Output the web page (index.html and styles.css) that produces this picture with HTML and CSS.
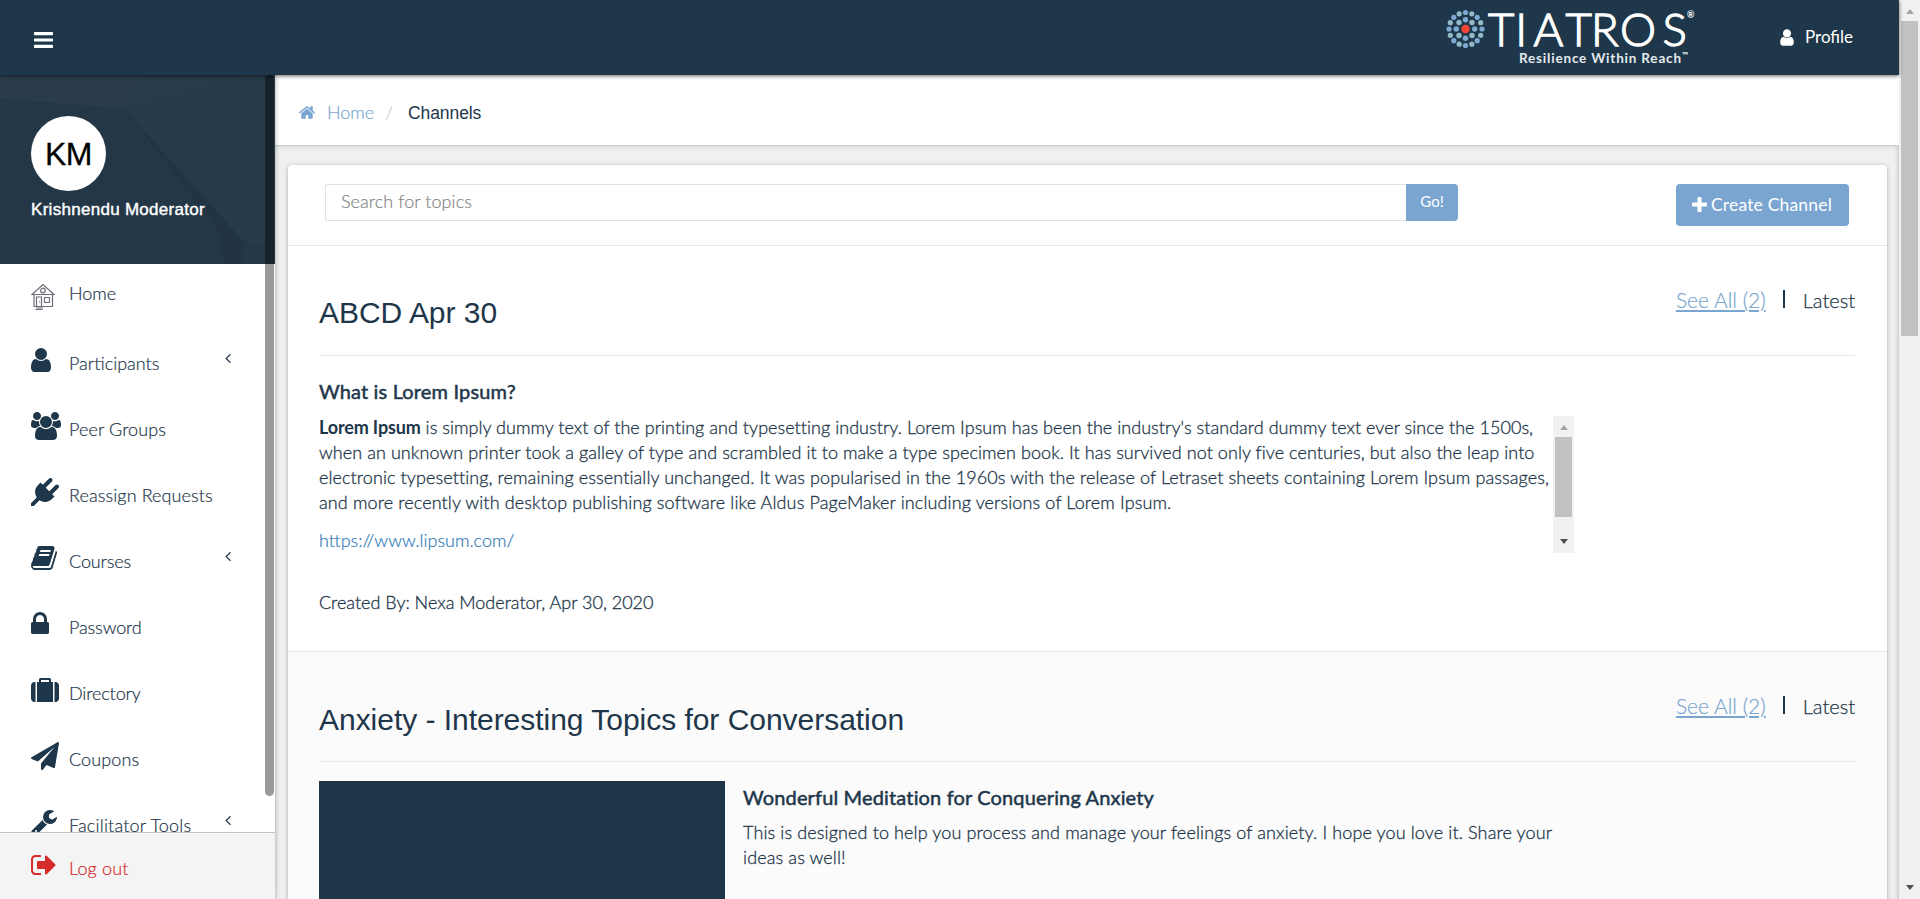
FILE: index.html
```html
<!DOCTYPE html>
<html lang="en">
<head>
<meta charset="utf-8">
<title>Channels</title>
<link rel="stylesheet" href="styles.css">
</head>
<body>
<svg class="sprite" aria-hidden="true">
  <symbol id="user" viewBox="256 0 1280 1792"><path d="M1536 1399q0 109-62.5 187t-150.5 78h-854q-88 0-150.5-78t-62.5-187q0-85 8.5-160.5t31.5-152 58.5-131 94-89 134.5-34.500q131 128 313 128t313-128q76 0 134.500 34.500t94 89 58.500 131 31.500 152 8.500 160.500zm-256-887q0 159-112.500 271.500t-271.500 112.500-271.500-112.500-112.500-271.500 112.500-271.500 271.500-112.500 271.500 112.500 112.500 271.500z"/></symbol>
  <symbol id="angle" viewBox="576 384 640 1152"><path d="M1203 544q0 13-10 23l-393 393 393 393q10 10 10 23t-10 23l-50 50q-10 10-23 10t-23-10l-466-466q-10-10-10-23t10-23l466-466q10-10 23-10t23 10l50 50q10 10 10 23z"/></symbol>
</svg>
<div class="app">
  <div class="page">
    <header class="topbar">
      <svg class="bars" viewBox="128 256 1536 1280"><path d="M1664 1344v128q0 26-19 45t-45 19h-1408q-26 0-45-19t-19-45v-128q0-26 19-45t45-19h1408q26 0 45 19t19 45zm0-512v128q0 26-19 45t-45 19h-1408q-26 0-45-19t-19-45v-128q0-26 19-45t45-19h1408q26 0 45 19t19 45zm0-512v128q0 26-19 45t-45 19h-1408q-26 0-45-19t-19-45v-128q0-26 19-45t45-19h1408q26 0 45 19t19 45z"/></svg>
      <div class="topright">
        <svg class="logo" viewBox="0 0 252 64">
          <g class="dot-a">
            <circle cx="19.500" cy="12.500" r="2.600"/><circle cx="31.200" cy="17.300" r="2.600"/><circle cx="36" cy="29" r="2.600"/><circle cx="31.200" cy="40.700" r="2.600"/><circle cx="19.500" cy="45.500" r="2.600"/><circle cx="7.800" cy="40.700" r="2.600"/><circle cx="3" cy="29" r="2.600"/><circle cx="7.800" cy="17.300" r="2.600"/>
            <circle cx="19.500" cy="19.800" r="2.700"/><circle cx="28.700" cy="29" r="2.700"/><circle cx="19.500" cy="38.200" r="2.700"/><circle cx="10.300" cy="29" r="2.700"/>
          </g>
          <g class="dot-b">
            <circle cx="25.800" cy="13.800" r="2.600"/><circle cx="34.700" cy="22.700" r="2.600"/><circle cx="34.700" cy="35.300" r="2.600"/><circle cx="25.800" cy="44.200" r="2.600"/><circle cx="13.200" cy="44.200" r="2.600"/><circle cx="4.300" cy="35.300" r="2.600"/><circle cx="4.300" cy="22.700" r="2.600"/><circle cx="13.200" cy="13.800" r="2.600"/>
            <circle cx="26" cy="22.500" r="2.700"/><circle cx="26" cy="35.500" r="2.700"/><circle cx="13" cy="35.500" r="2.700"/><circle cx="13" cy="22.500" r="2.700"/>
          </g>
          <circle class="dot-c" cx="19.500" cy="29" r="4.200"/>
          <text class="brand" y="45.500" x="42 69.200 87.500 119.500 145 174 216.500">TIATROS</text>
          <text class="reg" x="241" y="18">®</text>
          <text class="tagline" x="73" y="63" textLength="162" lengthAdjust="spacing">Resilience Within Reach</text>
          <text class="tm" x="236" y="58">™</text>
        </svg>
        <a class="profile"><svg class="i-user"><use href="#user"/></svg><span>Profile</span></a>
      </div>
    </header>
    <div class="columns">
      <aside class="sidebar">
        <div class="card">
          <svg class="facets" viewBox="0 0 275 189" preserveAspectRatio="none">
            <path fill="#2a3c4b" d="M0 0H146L124 34 0 24z"/><path fill="#253a4a" d="M146 0H275V170L245 168 124 34z"/><path fill="#283b4a" d="M146 0H265L124 34z"/><path fill="#223444" d="M124 34L245 168 240 189H215L140 70z"/><path fill="#213545" d="M0 24L124 34 140 70 160 189H45L0 60z"/><path fill="#243747" d="M124 34L215 150 225 189H45L30 150 0 60V24z"/>
          </svg>
          <div class="avatar">KM</div>
          <div class="name">Krishnendu Moderator</div>
        </div>
        <nav class="menu">
          <a class="item home"><svg class="house" viewBox="0 0 24 27"><path d="M1 11.500L12 1.500 23 11.500zM3 11.500V23.500H21.500V11.500M5.500 23V14h5v9M13.500 14.500h5v5h-5zM8.500 18.500v1"/><circle cx="12" cy="7.500" r="2.300"/><path d="M5 25h7M4.500 26.500h7"/></svg><span class="label">Home</span></a>
          <a class="item"><span class="ico"><svg class="w20"><use href="#user"/></svg></span><span class="label">Participants</span><svg class="angle"><use href="#angle"/></svg></a>
          <a class="item"><span class="ico"><svg class="w30" viewBox="0 0 1920 1792"><path d="M593 896q-162 5-265 128h-134q-82 0-138-40.500t-56-118.500q0-353 124-353 6 0 43.500 21t97.500 42.500 119 21.500q67 0 133-23-5 37-5 66 0 139 81 256zm1071 637q0 120-73 189.500t-194 69.500h-874q-121 0-194-69.500t-73-189.500q0-53 3.500-103.500t14-109 26.500-108.500 43-97.500 62-81 85.500-53.500 111.500-20q10 0 43 21.500t73 48 107 48 135 21.500 135-21.500 107-48 73-48 43-21.500q61 0 111.500 20t85.500 53.500 62 81 43 97.500 26.500 108.500 14 109 3.500 103.500zm-1024-1277q0 106-75 181t-181 75-181-75-75-181 75-181 181-75 181 75 75 181zm704 384q0 159-112.500 271.500t-271.500 112.500-271.500-112.500-112.500-271.500 112.500-271.500 271.500-112.500 271.500 112.500 112.500 271.500zm576 225q0 78-56 118.500t-138 40.500h-134q-103-123-265-128 81-117 81-256 0-29-5-66 66 23 133 23 59 0 119-21.500t97.500-42.500 43.500-21q124 0 124 353zm-128-609q0 106-75 181t-181 75-181-75-75-181 75-181 181-75 181 75 75 181z"/></svg></span><span class="label s1">Peer Groups</span></a>
          <a class="item"><span class="ico"><svg class="w28" viewBox="0 0 1792 1792"><path d="M1755 453q37 38 37 90.500t-37 90.500l-401 400 150 150-160 160q-163 163-389.500 186.500t-411.500-100.500l-362 362h-181v-181l362-362q-124-185-100.500-411.500t186.500-389.500l160-160 150 150 400-401q38-37 91-37t90 37 37 90.500-37 90.500l-400 401 234 234 401-400q38-37 91-37t90 37z"/></svg></span><span class="label s1">Reassign Requests</span></a>
          <a class="item"><span class="ico"><svg class="w28" viewBox="64 0 1792 1792"><path d="M1703 478q40 57 18 129l-275 906q-19 64-76.500 107.500t-122.500 43.500h-923q-77 0-148.500-53.500t-99.500-131.500q-24-67-2-127 0-4 3-27t4-37q1-8-3-21.500t-3-19.500q2-11 8-21t16.500-23.500 16.500-23.500q23-38 45-91.500t30-91.500q3-10 .5-30t-.5-28q3-11 17-28t17-23q21-36 42-92t25-90q1-9-2.500-32t.5-28q4-13 22-30.500t22-22.500q19-26 42.500-84.500t27.500-96.500q1-8-3-25.500t-2-26.500q2-8 9-18t18-23 17-21q8-12 16.500-30.500t15-35 16-36 19.500-32 26.500-23.500 36-11.500 47.500 5.500l-1 3q38-9 51-9h761q74 0 114 56t18 130l-274 906q-36 119-71.500 153.500t-128.500 34.500h-869q-27 0-38 15-11 16-1 43 24 70 144 70h923q29 0 56-15.500t35-41.500l300-987q7-22 5-57 38 15 59 43zm-1064 2q-4 13 2 22.500t20 9.500h608q13 0 25.500-9.500t16.500-22.500l21-64q4-13-2-22.500t-20-9.500h-608q-13 0-25.500 9.500t-16.500 22.500zm-83 256q-4 13 2 22.500t20 9.500h608q13 0 25.500-9.500t16.500-22.500l21-64q4-13-2-22.500t-20-9.500h-608q-13 0-25.500 9.500t-16.500 22.500z"/></svg></span><span class="label s0">Courses</span><svg class="angle"><use href="#angle"/></svg></a>
          <a class="item"><span class="ico"><svg class="w18" viewBox="320 0 1152 1792"><path d="M640 768h512v-192q0-106-75-181t-181-75-181 75-75 181v192zm832 96v576q0 40-28 68t-68 28h-960q-40 0-68-28t-28-68v-576q0-40 28-68t68-28h32v-192q0-184 132-316t316-132 316 132 132 316v192h32q40 0 68 28t28 68z"/></svg></span><span class="label s0">Password</span></a>
          <a class="item"><span class="ico"><svg class="w28" viewBox="0 0 1792 1792"><path d="M640 384h512v-128h-512v128zm-352 0v1280h-64q-92 0-158-66t-66-158v-832q0-92 66-158t158-66h64zm1120 0v1280h-1024v-1280h128v-160q0-40 28-68t68-28h576q40 0 68 28t28 68v160h128zm384 224v832q0 92-66 158t-158 66h-64v-1280h64q92 0 158 66t66 158z"/></svg></span><span class="label s0">Directory</span></a>
          <a class="item"><span class="ico"><svg class="w28" viewBox="0 0 1792 1792"><path d="M1764 11q33 24 27 64l-256 1536q-5 29-32 45-14 8-31 8-11 0-24-5l-453-185-242 295q-18 23-49 23-13 0-22-4-19-7-30.500-23.500t-11.500-36.500v-349l864-1059-1069 925-395-162q-37-14-40-55-2-40 32-59l1664-960q15-9 32-9 20 0 36 11z"/></svg></span><span class="label s1">Coupons</span></a>
          <a class="item"><span class="ico"><svg class="w28" viewBox="64 0 1792 1792"><path d="M448 1472q0-26-19-45t-45-19-45 19-19 45 19 45 45 19 45-19 19-45zm644-420l-682 682q-37 37-90 37-52 0-91-37l-106-108q-38-36-38-90 0-53 38-91l681-681q39 98 114.500 173.500t173.500 114.500zm634-435q0 39-23 106-47 134-164.500 217.500t-258.500 83.500q-185 0-316.500-131.500t-131.500-316.500 131.500-316.500 316.500-131.500q58 0 121.500 16.500t107.500 46.500q16 11 16 28t-16 28l-293 169v224l193 107q5-3 79-48.500t135.500-81 70.500-35.500q15 0 23.500 10t8.500 25z"/></svg></span><span class="label s2">Facilitator Tools</span><svg class="angle"><use href="#angle"/></svg></a>
        </nav>
        <a class="logout"><span class="ico"><svg class="w28" viewBox="64 0 1792 1792"><path d="M704 1440q0 4 1 20t.5 26.500-3 23.500-10 19.500-20.500 6.500h-320q-119 0-203.500-84.500t-84.500-203.500v-704q0-119 84.500-203.500t203.500-84.500h320q13 0 22.500 9.500t9.500 22.500q0 4 1 20t.5 26.500-3 23.500-10 19.500-20.500 6.500h-320q-66 0-113 47t-47 113v704q0 66 47 113t113 47h312l11.500 1 11.500 3 8 5.500 7 9 2 13.500zm928-544q0 26-19 45l-544 544q-19 19-45 19t-45-19-19-45v-288h-448q-26 0-45-19t-19-45v-384q0-26 19-45t45-19h448v-288q0-26 19-45t45-19 45 19l544 544q19 19 19 45z"/></svg></span><span class="label s2">Log out</span></a>
        <div class="side-thumb"></div>
      </aside>
      <main class="main">
        <div class="crumbs">
          <svg class="i-home" viewBox="89 253 1614 1283"><path d="M1472 992v480q0 26-19 45t-45 19h-384v-384h-256v384h-384q-26 0-45-19t-19-45v-480q0-1 .5-3t.5-3l575-474 575 474q1 2 1 6zm223-69l-62 74q-8 9-21 11h-3q-13 0-21-7l-692-577-692 577q-12 8-24 7-13-2-21-11l-62-74q-8-10-7-23.500t11-21.500l719-599q32-26 76-26t76 26l244 204v-195q0-14 9-23t23-9h192q14 0 23 9t9 23v408l219 182q10 8 11 21.500t-7 23.500z"/></svg>
          <a class="c-home">Home</a><span class="slash">/</span><span class="c-here">Channels</span>
        </div>
        <section class="panel">
          <div class="toolbar">
            <div class="search"><div class="field">Search for topics</div><div class="go">Go!</div></div>
            <a class="create"><svg class="i-plus" viewBox="192 128 1408 1408"><path d="M1600 736v192q0 40-28 68t-68 28h-416v416q0 40-28 68t-68 28h-192q-40 0-68-28t-28-68v-416h-416q-40 0-68-28t-28-68v-192q0-40 28-68t68-28h416v-416q0-40 28-68t68-28h192q40 0 68 28t28 68v416h416q40 0 68 28t28 68z"/></svg><span>Create Channel</span></a>
          </div>
          <article class="channel">
            <div class="head"><h2 class="title">ABCD Apr 30</h2><div class="links"><a class="all">See All (2)</a><i class="sep"></i><span class="latest">Latest</span></div></div>
            <h3 class="topic">What is Lorem Ipsum?</h3>
            <div class="scroller">
              <div class="copy">
                <p class="text"><span class="l1"><b>Lorem Ipsum</b> is simply dummy text of the printing and typesetting industry. Lorem Ipsum has been the industry's standard dummy text ever since the 1500s,</span><br><span class="l2">when an unknown printer took a galley of type and scrambled it to make a type specimen book. It has survived not only five centuries, but also the leap into</span><br><span class="l3">electronic typesetting, remaining essentially unchanged. It was popularised in the 1960s with the release of Letraset sheets containing Lorem Ipsum passages,</span><br><span class="l4">and more recently with desktop publishing software like Aldus PageMaker including versions of Lorem Ipsum.</span></p>
                <a class="url">https://www.lipsum.com/</a>
              </div>
              <div class="bar"><i class="up"></i><i class="thumb"></i><i class="down"></i></div>
            </div>
            <div class="by">Created By: Nexa Moderator, Apr 30, 2020</div>
          </article>
          <article class="channel alt">
            <div class="head"><h2 class="title">Anxiety - Interesting Topics for Conversation</h2><div class="links"><a class="all">See All (2)</a><i class="sep"></i><span class="latest">Latest</span></div></div>
            <div class="media">
              <div class="video"></div>
              <div>
                <h3 class="topic">Wonderful Meditation for Conquering Anxiety</h3>
                <p class="text l4">This is designed to help you process and manage your feelings of anxiety. I hope you love it. Share your<br>ideas as well!</p>
              </div>
            </div>
          </article>
        </section>
      </main>
    </div>
  </div>
  <div class="bar window"><i class="up"></i><i class="thumb"></i><i class="down"></i></div>
</div>
</body>
</html>
```
FILE: styles.css
```css
* { box-sizing: border-box; }
body { margin: 0; font-family: "Lato", "Liberation Sans", sans-serif; font-weight: 300; font-size: 18px; color: #1e364a; }
h2, h3, p { margin: 0; }
svg { fill: currentColor; display: block; flex: none; }
.sprite { position: absolute; width: 0; height: 0; }
.app { display: flex; width: 1920px; height: 899px; overflow: hidden; background: #eee; }
.page { width: 1899px; display: flex; flex-direction: column; }
.topbar { height: 75px; flex: none; background: #1e374a; color: #fff; display: flex; justify-content: space-between; padding-left: 34px; box-shadow: 0 1px 4px rgba(0,0,0,.6); position: relative; z-index: 3; }
.bars { width: 19px; height: 16px; margin-top: 32px; }
.topright { display: flex; }
.logo { width: 252px; height: 64px; overflow: visible; margin-right: 82px; }
.dot-a { fill: #7ea9d1; }
.dot-b { fill: #92b9c6; }
.dot-c { fill: #f84535; }
.brand { font-size: 45.5px; font-weight: 300; fill: #fff; stroke: #fff; stroke-width: 1.3px; }
.reg { font-size: 9px; font-weight: 700; }
.tagline { font-size: 13.5px; font-weight: 700; fill: #e6eaee; }
.tm { font-size: 8px; font-weight: 700; }
.profile { width: 119px; display: flex; font-weight: 400; line-height: 24px; padding-top: 25px; font-size: 17px; }
.i-user { width: 14px; height: 19px; margin: 3px 11px 0 0; }
.columns { flex: 1; display: flex; min-height: 0; }
.sidebar { width: 275px; background: #fff; position: relative; display: flex; flex-direction: column; z-index: 2; box-shadow: 0 0 5px rgba(0,0,0,.35); }
.card { height: 189px; flex: none; background: #253848; color: #fff; position: relative; padding: 41px 0 0 31px; }
.facets { position: absolute; left: 0; top: 0; width: 275px; height: 189px; }
.avatar { position: relative; width: 75px; height: 75px; border-radius: 50%; background: #fff; color: #000; font: 400 32px/76px "Liberation Sans", sans-serif; text-align: center; letter-spacing: -.5px; -webkit-text-stroke: .3px #000; }
.name { position: relative; font: 400 17px/24px "Liberation Sans", sans-serif; letter-spacing: .29px; margin-top: 7px; -webkit-text-stroke: .4px #fff; white-space: nowrap; }
.menu { flex: 1; overflow: hidden; min-height: 0; }
.item { display: flex; height: 66px; padding: 14px 0 0 31px; position: relative; line-height: 24px; white-space: nowrap; }
.label { margin-top: 5px; -webkit-text-stroke: .2px currentColor; }
.s0 { letter-spacing: -.12px; }
.s1 { letter-spacing: .1px; }
.s2 { letter-spacing: .18px; }
.ico { width: 38px; flex: none; }
.ico svg { height: 28px; color: #1e374a; }
.w18 { width: 18px; }
.w20 { width: 20px; }
.w28 { width: 28px; }
.w30 { width: 30px; }
.home { height: 68px; padding-top: 18px; }
.home .label { margin-top: -1px; }
.house { width: 24px; height: 27px; margin: 1px 14px 0 0; fill: none; stroke: #6c6f78; stroke-width: 1.2; }
.angle { width: 6px; height: 11px; position: absolute; left: 225px; top: 21px; }
.logout { height: 67px; flex: none; background: #f4f4f4; border-top: 1px solid #bfc3c9; color: #d52b2b; display: flex; padding: 18px 0 0 31px; line-height: 24px; }
.logout .ico svg { color: #d52b2b; }
.side-thumb { position: absolute; left: 265px; top: 0; width: 9px; height: 721px; border-radius: 5px; background: rgba(0,0,0,.4); }
.main { flex: 1; background: #f0f0f0; box-shadow: inset -3px 0 4px -2px rgba(0,0,0,.2); }
.crumbs { height: 71px; background: #fff; border-bottom: 1px solid #ccd0d0; box-shadow: 0 1px 5px rgba(0,0,0,.1); display: flex; padding: 25px 0 0 24px; line-height: 24px; }
.i-home { width: 16px; height: 13px; margin: 6px 12px 0 0; color: #79a5d0; }
.c-home, .all { color: #79a5d0; -webkit-text-stroke: .2px currentColor; }
.slash { margin: 0 15px 0 11px; color: #bbb; }
.c-here { font: 400 17.5px/26px "Liberation Sans", sans-serif; letter-spacing: -.1px; }
.panel { margin: 19px 12px 0 13px; background: #fff; border-radius: 4px 4px 0 0; box-shadow: 0 1px 4px rgba(0,0,0,.3); height: 760px; }
.toolbar { height: 81px; border-bottom: 1px solid #e6e7e7; display: flex; justify-content: space-between; padding: 19px 38px 0 37px; }
.search { display: flex; height: 37px; width: 1133px; line-height: 33px; }
.field { flex: 1; border: 1px solid #e2e2e2; border-right: 0; border-radius: 2px 0 0 2px; padding-left: 15px; color: #858585; letter-spacing: .076px; -webkit-text-stroke: .2px currentColor; }
.go { width: 52px; background: #79a5d0; color: #fff; text-align: center; font-size: 15px; font-weight: 400; line-height: 35px; border-radius: 0 4px 4px 0; }
.create { width: 173px; height: 42px; border-radius: 4px; background: #79a5d0; color: #fff; display: flex; padding-left: 16px; line-height: 41px; font-weight: 400; font-size: 17.5px; letter-spacing: .18px; white-space: nowrap; }
.i-plus { width: 15px; height: 15px; margin: 13px 4px 0 0; }
.channel { height: 406px; border-bottom: 1px solid #e6e7e7; padding: 0 32px 0 31px; }
.alt { background: #fbfbfb; height: 260px; }
.head { height: 110px; border-bottom: 1px solid #e6e7e7; display: flex; justify-content: space-between; }
.title { font: 400 30px/40px "Liberation Sans", sans-serif; letter-spacing: -.03px; margin-top: 47px; }
.alt .title { margin-top: 48px; }
.links { display: flex; margin-top: 42px; line-height: 24px; font-size: 20px; }
.all { text-decoration: underline; text-decoration-thickness: 2px; text-underline-offset: 2px; font-size: 21px; }
.latest { -webkit-text-stroke: .25px currentColor; }
.sep { width: 2px; height: 18px; background: #1e364a; margin: 2px 18px 0 17px; }
.topic { font-weight: 400; font-size: 20px; letter-spacing: .15px; line-height: 24px; -webkit-text-stroke: .5px #1e364a; padding-top: 23px; }
.scroller { display: flex; height: 137px; width: 1255px; margin-top: 13px; }
.copy { flex: 1; white-space: nowrap; margin-top: -1px; }
.text { line-height: 25px; white-space: nowrap; -webkit-text-stroke: .3px currentColor; }
.text b { font-weight: 700; -webkit-text-stroke: 0; letter-spacing: -.15px; }
.l1 { letter-spacing: .04px; }
.l2 { letter-spacing: .068px; }
.l3 { letter-spacing: .093px; }
.l4 { letter-spacing: .126px; }
.url { display: block; color: #337ab7; line-height: 25px; margin-top: 13px; -webkit-text-stroke: .2px currentColor; }
.bar { width: 21px; flex: none; background: #f1f1f1; display: flex; flex-direction: column; align-items: center; }
.up, .down { border: 4.5px solid transparent; border-top: 0; border-bottom: 5px solid #a3a3a3; margin: 9px 0 7px; }
.down { border-bottom: 0; border-top: 5px solid #505050; margin: auto 0 9px; }
.thumb { width: 17px; height: 80px; background: #c1c1c1; }
.window .thumb { height: 315px; }
.by { margin-top: 37px; line-height: 24px; -webkit-text-stroke: .3px currentColor; }
.media { display: flex; gap: 18px; padding-top: 19px; }
.video { width: 406px; height: 140px; background: #1f354a; }
.media .topic { padding: 4px 0 11px; }
```
